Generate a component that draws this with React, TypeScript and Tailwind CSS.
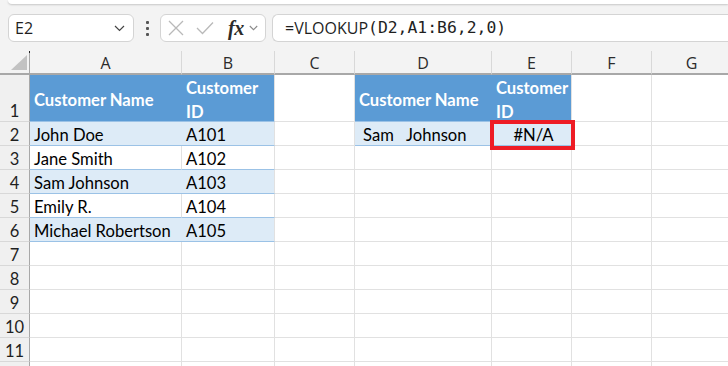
import React from "react";

const COLS = [152, 93, 80, 137, 80, 80, 80];
const LETTERS = ["A", "B", "C", "D", "E", "F", "G"];

type Cell = {
  text?: string;
  kind?: "head" | "blue" | "white" | "none";
  align?: "left" | "center";
  pre?: boolean;
  err?: boolean;
};

const E: Cell[] = [{}, {}, {}, {}, {}, {}, {}];

const ROWS: { h: number; label: string; cells: Cell[] }[] = [
  {
    h: 47,
    label: "1",
    cells: [
      { text: "Customer Name", kind: "head" },
      { text: "Customer ID", kind: "head" },
      {},
      { text: "Customer Name", kind: "head" },
      { text: "Customer ID", kind: "head" },
      {},
      {},
    ],
  },
  {
    h: 24,
    label: "2",
    cells: [
      { text: "John Doe", kind: "blue" },
      { text: "A101", kind: "blue" },
      {},
      { text: "Sam   Johnson", kind: "blue", pre: true },
      { text: "#N/A", kind: "blue", align: "center", err: true },
      {},
      {},
    ],
  },
  { h: 24, label: "3", cells: [{ text: "Jane Smith", kind: "white" }, { text: "A102", kind: "white" }, {}, {}, {}, {}, {}] },
  { h: 24, label: "4", cells: [{ text: "Sam Johnson", kind: "blue" }, { text: "A103", kind: "blue" }, {}, {}, {}, {}, {}] },
  { h: 24, label: "5", cells: [{ text: "Emily R.", kind: "white" }, { text: "A104", kind: "white" }, {}, {}, {}, {}, {}] },
  { h: 24, label: "6", cells: [{ text: "Michael Robertson", kind: "blue" }, { text: "A105", kind: "blue" }, {}, {}, {}, {}, {}] },
  { h: 24, label: "7", cells: E },
  { h: 24, label: "8", cells: E },
  { h: 24, label: "9", cells: E },
  { h: 24, label: "10", cells: E },
  { h: 24, label: "11", cells: E },
  { h: 24, label: "", cells: E },
];

const cellFont = { fontFamily: "Lato, 'Liberation Sans', sans-serif" };
const uiFont = { fontFamily: "'Open Sans', 'Noto Sans', sans-serif" };

function DataCell({ c, w, h, colIdx }: { c: Cell; w: number; h: number; colIdx: number }) {
  let bg = "bg-white";
  let border = "border-r border-b border-[#e1e1e1]";
  if (c.kind === "head" || c.kind === "blue") {
    bg = c.kind === "head" ? "bg-[#5b9bd5]" : "bg-[#ddebf7]";
    border =
      colIdx === 0 || colIdx === 3
        ? "border-b border-[#9bc2e6]"
        : "border-r border-b border-r-[#e1e1e1] border-b-[#9bc2e6]";
  } else if (c.kind === "white") {
    border = "border-r border-b border-r-[#e1e1e1] border-b-[#9bc2e6]";
  }
  const isHead = c.kind === "head";
  const wrapId = isHead && c.text === "Customer ID";
  const vAlign = wrapId ? "items-start" : isHead ? "items-center" : "items-end";
  return (
    <div
      className={`relative shrink-0 ${bg} ${border} flex ${vAlign} ${
        c.align === "center" ? "justify-center" : "justify-start"
      } ${c.pre ? "pl-[8px]" : "pl-[4px]"}`}
      style={{ width: w, height: h, ...cellFont }}
    >
      {c.text && !wrapId && (
        <span
          className={`${isHead ? "font-bold text-white pt-[4px]" : "text-black"} text-[16.6px] leading-[20px] ${
            c.pre ? "whitespace-pre" : "whitespace-nowrap"
          }`}
        >
          {c.text}
        </span>
      )}
      {wrapId && (
        <span className="pt-[1px] font-bold text-white text-[16.6px] leading-[24px] whitespace-nowrap">
          Customer
          <br />
          ID
        </span>
      )}
      {c.err && (
        <div className="absolute z-10 left-[-2px] top-[-2px] w-[85px] h-[30px] border-[4px] border-[#ee1c25]" />
      )}
    </div>
  );
}

export default function App() {
  return (
    <div className="w-[728px] h-[366px] overflow-hidden bg-[#f3f3f3] relative" style={uiFont}>
      {/* top white strip */}
      <div className="h-[4px] ml-[8px] bg-white rounded-bl-[6px] shadow-[0_1px_2px_rgba(0,0,0,0.18)]" />

      {/* formula bar */}
      <div className="flex items-center h-[28px] mt-[10px] pl-[8px]">
        <div className="w-[126px] h-[28px] bg-white border border-[#d4d4d4] rounded-[6px] flex items-center justify-between pl-[6px] pr-[8px]">
          <span className="text-[16px] text-[#1f1f1f] leading-none">E2</span>
          <svg width="11" height="7" viewBox="0 0 11 7">
            <path d="M1 1 L5.5 5.5 L10 1" fill="none" stroke="#444" strokeWidth="1.2" />
          </svg>
        </div>
        <div className="w-[26px] flex flex-col items-center gap-[3px]">
          <span className="w-[3px] h-[3px] bg-[#555] rounded-[1px]" />
          <span className="w-[3px] h-[3px] bg-[#555] rounded-[1px]" />
          <span className="w-[3px] h-[3px] bg-[#555] rounded-[1px]" />
        </div>
        <div className="w-[106px] h-[28px] bg-white border border-[#d4d4d4] rounded-[6px] flex items-center pl-[7px]">
          <svg width="16" height="16" viewBox="0 0 16 16">
            <path d="M1 1 L15 15 M15 1 L1 15" stroke="#b9b9b9" strokeWidth="1.3" fill="none" />
          </svg>
          <svg width="18" height="14" viewBox="0 0 18 14" className="ml-[12px]">
            <path d="M1 7 L6.5 12.5 L17 1.5" stroke="#b9b9b9" strokeWidth="1.3" fill="none" />
          </svg>
          <span
            className="ml-[14px] italic font-bold text-[20px] leading-none text-[#2b2b2b] tracking-[-0.5px]"
            style={{ fontFamily: "'Liberation Serif', 'DejaVu Serif', serif" }}
          >
            fx
          </span>
          <svg width="9" height="6" viewBox="0 0 9 6" className="ml-[5px]">
            <path d="M0.8 1 L4.5 4.7 L8.2 1" fill="none" stroke="#8a8a8a" strokeWidth="1.1" />
          </svg>
        </div>
        <div className="ml-[6px] flex-1 h-[28px] bg-white border border-[#d4d4d4] border-r-0 rounded-l-[6px] flex items-center pl-[12px]">
          <span className="text-[16px] text-[#1f1f1f] leading-none">=VLOOKUP</span>
          <span
            className="text-[16.4px] text-[#1f1f1f] leading-none"
            style={{ fontFamily: "'DejaVu Sans Mono', 'Liberation Mono', monospace" }}
          >
            (D2,A1:B6,2,0)
          </span>
        </div>
      </div>

      {/* grid */}
      <div className="mt-[9px] flex flex-col">
        {/* column header */}
        <div className="flex h-[24px]">
          <div className="relative w-[30px] shrink-0 border-r border-b-[2px] border-r-[#a8a8a8] border-b-[#a8a8a8] bg-[#f3f3f3]">
            <svg width="17" height="16" viewBox="0 0 17 16" className="absolute left-[11px] top-[4px]">
              <path d="M16 0 L16 15 L0 15 Z" fill="#c2c2c2" />
            </svg>
            <span className="absolute right-[-1px] top-0 w-[1px] h-[2px] bg-[#222]" />
          </div>
          {LETTERS.map((l, i) => (
            <div
              key={l}
              className="shrink-0 flex items-center justify-center pt-[2px] border-r border-r-[#d8d8d8] border-b-[2px] border-b-[#a8a8a8] bg-[#f3f3f3] text-[16px] text-[#2b2b2b] leading-none"
              style={{ width: COLS[i] }}
            >
              {l}
            </div>
          ))}
        </div>
        {ROWS.map((r, ri) => (
          <div key={ri} className="flex" style={{ height: r.h }}>
            <div
              className="w-[30px] shrink-0 flex items-end justify-center border-r border-b border-r-[#a8a8a8] border-b-[#d8d8d8] bg-[#f0f0f0] text-[16.5px] text-[#1f1f1f] leading-[20px]"
              style={cellFont}
            >
              {r.label}
            </div>
            {r.cells.map((c, ci) => (
              <DataCell key={ci} c={c} w={COLS[ci]} h={r.h} colIdx={ci} />
            ))}
          </div>
        ))}
      </div>
    </div>
  );
}
